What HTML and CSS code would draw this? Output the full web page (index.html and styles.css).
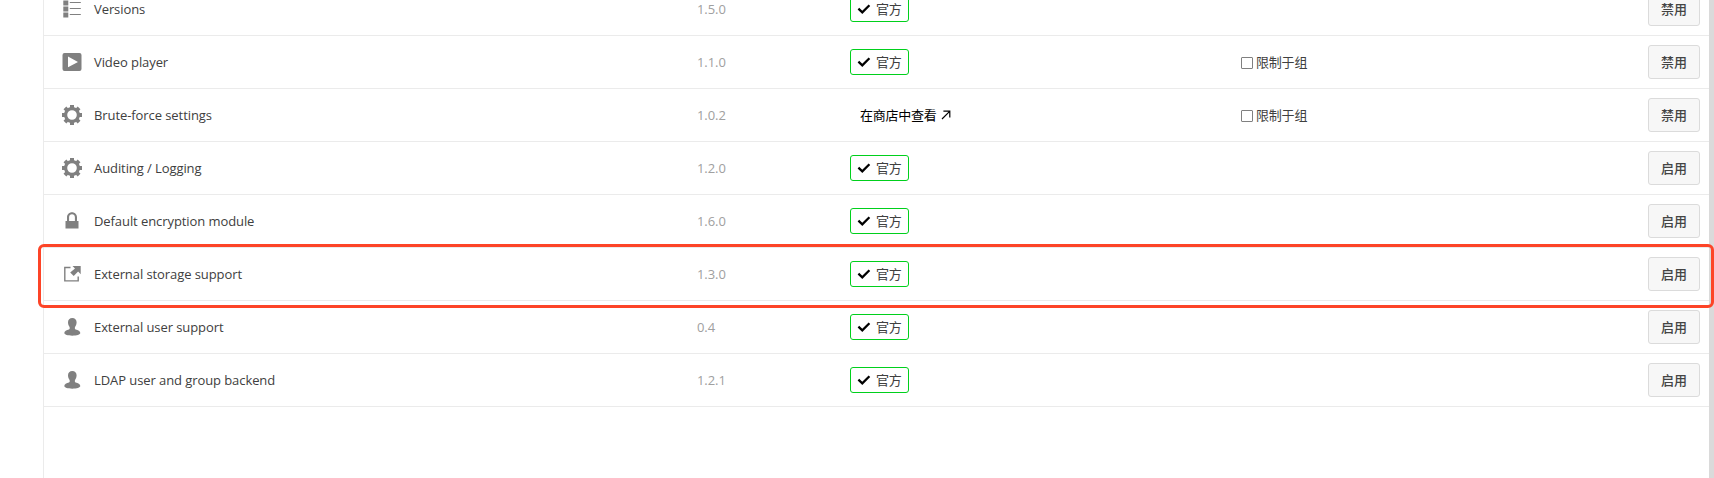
FILE: index.html
```html
<!DOCTYPE html>
<html lang="zh-CN">
<head>
<meta charset="utf-8">
<title>Apps</title>
<link rel="stylesheet" href="styles.css">
</head>
<body>
<svg class="defs" aria-hidden="true">
  <symbol id="list" viewBox="0 0 20 20"><path d="M1.300 1.500h5v5h-5zM1.300 7.500h5v5h-5zM1.300 13.500h5v5h-5zM7.800 3h11v1h-11zM7.800 9h11v1h-11zM7.800 15h11v1h-11z"/></symbol>
  <symbol id="video" viewBox="0 0 20 20"><path fill-rule="evenodd" d="M2.500 1h15A2 2 0 0 1 19.500 3v14a2 2 0 0 1-2 2h-15a2 2 0 0 1-2-2V3a2 2 0 0 1 2-2zM6 4.600v10.600l10-5.300z"/></symbol>
  <symbol id="gear" viewBox="0 0 20 20"><circle cx="10" cy="10" r="6.400" fill="none" stroke="#808080" stroke-width="3.200"/><path id="teeth" d="M8 0h4v3H8zM8 17h4v3H8zM0 8h3v4H0zM17 8h3v4h-3z"/><use href="#teeth" transform="rotate(45 10 10)"/></symbol>
  <symbol id="lock" viewBox="0 0 20 20"><path fill-rule="evenodd" d="M10 1.200c-2.800 0-5 2.200-5 5V10H3.500v7.500h13V10H15V6.200c0-2.800-2.200-5-5-5zm0 2c1.700 0 2.900 1.300 2.900 3V10H7.100V6.200c0-1.700 1.200-3 2.900-3z"/></symbol>
  <symbol id="external" viewBox="0 0 20 20"><path d="M8.500 2.800v1.400H3.500v12h12V12.500h1.400v5H2.100V2.800zM10.500 2h8.200v8.200l-2.600-2.600-4.400 4.300-3.500-3.500 4.800-4z"/></symbol>
  <symbol id="user" viewBox="0 0 20 20"><path d="M10.300 1c2.600 0 4.300 1.800 4.300 4.300 0 1.500-.4 3-1.300 4.200-.6 1-.7 2.500.3 3 2.500.8 4.700 1.400 4.700 3.600 0 1.600-3.500 2.600-8 2.600s-8-1-8-2.600c0-2.200 2.200-2.800 4.700-3.600 1-.5.9-2 .3-3C6.400 8.300 6 6.800 6 5.300 6 2.800 7.700 1 10.300 1z"/></symbol>
  <symbol id="check" viewBox="0 0 14 12"><path d="M1.400 5.700 5.300 9.300 12.400 2.300" fill="none" stroke="#000" stroke-width="2.300"/></symbol>
</svg>
<main class="page">
  <section class="apps">
    <div class="row"><svg class="icon"><use href="#list"/></svg><span class="name">Versions</span><span class="version">1.5.0</span><span class="level"><span class="official"><svg class="check"><use href="#check"/></svg>官方</span></span><span class="groups"></span><button class="action">禁用</button></div>
    <div class="row"><svg class="icon"><use href="#video"/></svg><span class="name">Video player</span><span class="version">1.1.0</span><span class="level"><span class="official"><svg class="check"><use href="#check"/></svg>官方</span></span><label class="groups"><input class="box" type="checkbox">限制于组</label><button class="action">禁用</button></div>
    <div class="row"><svg class="icon"><use href="#gear"/></svg><span class="name">Brute-force settings</span><span class="version">1.0.2</span><span class="level"><a class="store">在商店中查看<svg class="arrow" viewBox="0 0 10 10"><path d="M1 9 8.400 1.600M2.400 1.200h6.400v6.400"/></svg></a></span><label class="groups"><input class="box" type="checkbox">限制于组</label><button class="action">禁用</button></div>
    <div class="row"><svg class="icon"><use href="#gear"/></svg><span class="name">Auditing / Logging</span><span class="version">1.2.0</span><span class="level"><span class="official"><svg class="check"><use href="#check"/></svg>官方</span></span><span class="groups"></span><button class="action">启用</button></div>
    <div class="row"><svg class="icon"><use href="#lock"/></svg><span class="name">Default encryption module</span><span class="version">1.6.0</span><span class="level"><span class="official"><svg class="check"><use href="#check"/></svg>官方</span></span><span class="groups"></span><button class="action">启用</button></div>
    <div class="row marked"><svg class="icon"><use href="#external"/></svg><span class="name">External storage support</span><span class="version">1.3.0</span><span class="level"><span class="official"><svg class="check"><use href="#check"/></svg>官方</span></span><span class="groups"></span><button class="action">启用</button></div>
    <div class="row"><svg class="icon"><use href="#user"/></svg><span class="name">External user support</span><span class="version">0.4</span><span class="level"><span class="official"><svg class="check"><use href="#check"/></svg>官方</span></span><span class="groups"></span><button class="action">启用</button></div>
    <div class="row"><svg class="icon"><use href="#user"/></svg><span class="name">LDAP user and group backend</span><span class="version">1.2.1</span><span class="level"><span class="official"><svg class="check"><use href="#check"/></svg>官方</span></span><span class="groups"></span><button class="action">启用</button></div>
  </section>
  <div class="scrollbar"></div>
</main>
</body>
</html>
```
FILE: styles.css
```css
body {
  margin: 0;
  background: #fff;
  color: #404040;
  font: 13px/20px "Open Sans", "Noto Sans CJK SC", sans-serif;
}
.defs {
  position: absolute;
  width: 0;
  height: 0;
}
.page {
  display: flex;
  height: 478px;
  padding-left: 43px;
  overflow: hidden;
}
.apps {
  flex: 1;
  border-left: 1px solid #ebebeb;
  margin-top: -17px;
}
.row {
  position: relative;
  display: grid;
  grid-template-columns: 50px 603px 153px 391px 1fr 52px;
  align-items: center;
  box-sizing: border-box;
  height: 53px;
  padding-right: 9px;
  border-bottom: 1px solid #ebebeb;
}
.marked::after {
  content: "";
  position: absolute;
  z-index: 1;
  inset: -4px -5px -8px -6px;
  border: 3px solid #fd4427;
  border-radius: 6px;
}
.icon {
  width: 20px;
  height: 20px;
  margin-left: 18px;
  fill: #808080;
}
.name { letter-spacing: -0.08px; }
.version { color: #a0a0a0; letter-spacing: -0.08px; }
.level { display: flex; }
.official {
  display: flex;
  align-items: center;
  gap: 5px;
  box-sizing: border-box;
  width: 59px;
  height: 26px;
  padding-left: 6px;
  border: 1px solid #00d01c;
  border-radius: 3px;
  letter-spacing: -0.2px;
}
.check { width: 14px; height: 12px; }
.store {
  display: flex;
  align-items: center;
  gap: 4px;
  padding-left: 10px;
  color: #000;
  letter-spacing: -0.25px;
}
.arrow {
  width: 10px;
  height: 10px;
  fill: none;
  stroke: #000;
  stroke-width: 1.2;
}
.groups {
  display: flex;
  align-items: center;
  gap: 3px;
  letter-spacing: -0.2px;
}
.box {
  appearance: none;
  box-sizing: border-box;
  width: 12px;
  height: 12px;
  margin: 1px 0 0;
  border: 1px solid #808080;
  border-radius: 1px;
  background: #fff;
}
.action {
  box-sizing: border-box;
  width: 52px;
  height: 34px;
  padding: 0;
  border: 1px solid #dbdbdb;
  border-radius: 3px;
  background: #f7f7f7;
  color: #444;
  font: 500 13px/20px "Noto Sans CJK SC", sans-serif;
}
.scrollbar { width: 5px; background: #dadada; }
```
